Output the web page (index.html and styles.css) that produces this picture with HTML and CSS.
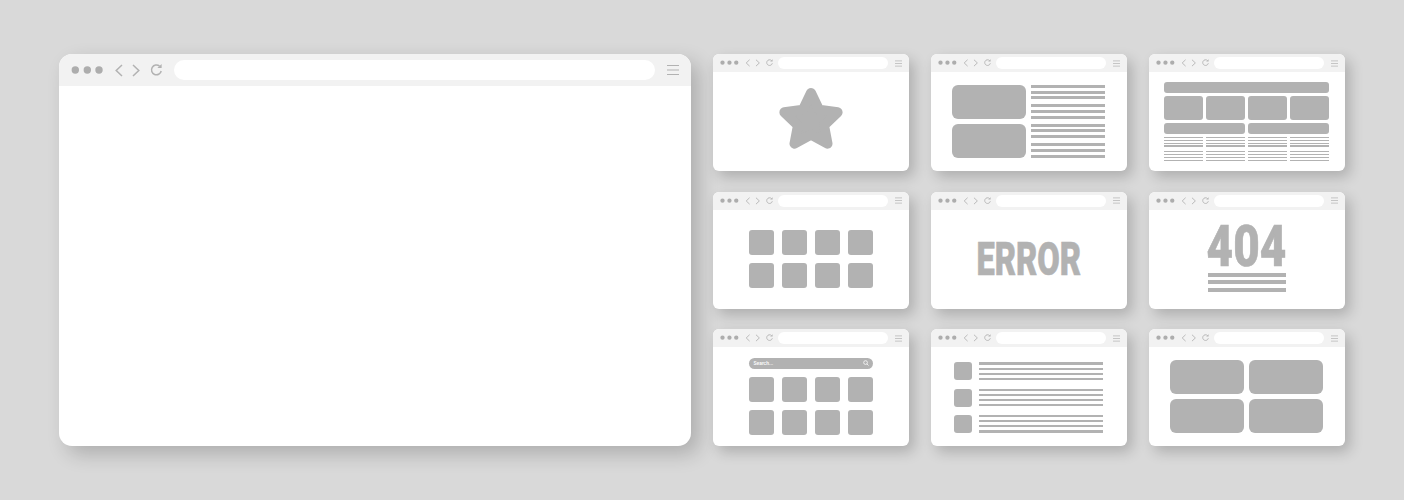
FILE: index.html
```html
<!DOCTYPE html>
<html lang="en">
<head>
  <meta charset="UTF-8" />
  <title>Browser Windows</title>
  <link rel="stylesheet" href="styles.css">
</head>
<body>

  <!-- Shared toolbar icons -->
  <svg class="icon-defs" width="0" height="0">
    <symbol id="nav-icons" viewBox="0 0 92 16">
      <circle cx="4.3" cy="8" r="3.7" fill="#adadad"/>
      <circle cx="16.3" cy="8" r="3.7" fill="#adadad"/>
      <circle cx="28" cy="8" r="3.7" fill="#adadad"/>
      <path d="M51 3 L45.2 8.5 L51 14" fill="none" stroke="#b2b2b2" stroke-width="1.5"/>
      <path d="M62 3 L67.8 8.5 L62 14" fill="none" stroke="#b2b2b2" stroke-width="1.5"/>
      <path d="M88.6 4.2 A4.9 4.9 0 1 0 90.2 9" fill="none" stroke="#b2b2b2" stroke-width="1.5"/>
      <path d="M90.6 2 V6 H86.4 Z" fill="#b2b2b2"/>
    </symbol>
    <symbol id="menu-icon" viewBox="0 0 12 12">
      <path d="M0 1.5 H12 M0 6 H12 M0 10.5 H12" stroke="#b2b2b2" stroke-width="1.2"/>
    </symbol>
  </svg>

  <div class="layout">

    <!-- Big window -->
    <div class="window window-large">
      <div class="toolbar">
        <svg class="nav"><use href="#nav-icons"/></svg>
        <div class="address"></div>
        <svg class="menu"><use href="#menu-icon"/></svg>
      </div>
    </div>

    <div class="thumbs">

      <!-- Star -->
      <div class="window">
        <div class="toolbar">
          <svg class="nav"><use href="#nav-icons"/></svg>
          <div class="address"></div>
          <svg class="menu"><use href="#menu-icon"/></svg>
        </div>
        <div class="body">
          <svg class="star" viewBox="0 0 66 62">
            <path d="M33 6 L41 22.7 L59.6 25.3 L46 38.3 L49.5 56.7 L33 47.6 L16.5 56.7 L20 38.3 L6.4 25.3 L25 22.7 Z"/>
          </svg>
        </div>
      </div>

      <!-- Article -->
      <div class="window">
        <div class="toolbar">
          <svg class="nav"><use href="#nav-icons"/></svg>
          <div class="address"></div>
          <svg class="menu"><use href="#menu-icon"/></svg>
        </div>
        <div class="body">
          <div class="article">
            <div class="article-pics">
              <div class="block"></div>
              <div class="block"></div>
            </div>
            <div class="article-text">
              <div class="lines"><i></i><i></i><i></i></div>
              <div class="lines"><i></i><i></i><i></i></div>
              <div class="lines"><i></i><i></i><i></i></div>
              <div class="lines"><i></i><i></i><i></i></div>
            </div>
          </div>
        </div>
      </div>

      <!-- Dense page -->
      <div class="window">
        <div class="toolbar">
          <svg class="nav"><use href="#nav-icons"/></svg>
          <div class="address"></div>
          <svg class="menu"><use href="#menu-icon"/></svg>
        </div>
        <div class="body">
          <div class="dense">
            <div class="block dense-top"></div>
            <div class="dense-four">
              <div class="block"></div><div class="block"></div><div class="block"></div><div class="block"></div>
            </div>
            <div class="dense-two">
              <div class="block"></div><div class="block"></div>
            </div>
            <div class="dense-four dense-text">
              <div class="fine"><div class="lines"><i></i><i></i><i></i><i></i></div><div class="lines"><i></i><i></i><i></i><i></i></div></div>
              <div class="fine"><div class="lines"><i></i><i></i><i></i><i></i></div><div class="lines"><i></i><i></i><i></i><i></i></div></div>
              <div class="fine"><div class="lines"><i></i><i></i><i></i><i></i></div><div class="lines"><i></i><i></i><i></i><i></i></div></div>
              <div class="fine"><div class="lines"><i></i><i></i><i></i><i></i></div><div class="lines"><i></i><i></i><i></i><i></i></div></div>
            </div>
          </div>
        </div>
      </div>

      <!-- Tiles -->
      <div class="window">
        <div class="toolbar">
          <svg class="nav"><use href="#nav-icons"/></svg>
          <div class="address"></div>
          <svg class="menu"><use href="#menu-icon"/></svg>
        </div>
        <div class="body">
          <div class="tiles">
            <div class="block"></div><div class="block"></div><div class="block"></div><div class="block"></div>
            <div class="block"></div><div class="block"></div><div class="block"></div><div class="block"></div>
          </div>
        </div>
      </div>

      <!-- Error -->
      <div class="window">
        <div class="toolbar">
          <svg class="nav"><use href="#nav-icons"/></svg>
          <div class="address"></div>
          <svg class="menu"><use href="#menu-icon"/></svg>
        </div>
        <div class="body">
          <span class="big-text error-text">ERROR</span>
        </div>
      </div>

      <!-- 404 -->
      <div class="window">
        <div class="toolbar">
          <svg class="nav"><use href="#nav-icons"/></svg>
          <div class="address"></div>
          <svg class="menu"><use href="#menu-icon"/></svg>
        </div>
        <div class="body">
          <div class="not-found">
            <span class="big-text code-text">404</span>
            <div class="lines"><i></i><i></i><i></i></div>
          </div>
        </div>
      </div>

      <!-- Search -->
      <div class="window">
        <div class="toolbar">
          <svg class="nav"><use href="#nav-icons"/></svg>
          <div class="address"></div>
          <svg class="menu"><use href="#menu-icon"/></svg>
        </div>
        <div class="body">
          <div class="search-page">
            <div class="search">
              <span>Search...</span>
              <svg class="search-icon" viewBox="0 0 8 8">
                <circle cx="3.4" cy="3.4" r="2.5"/>
                <path d="M5.2 5.2 L7.4 7.4"/>
              </svg>
            </div>
            <div class="tiles">
              <div class="block"></div><div class="block"></div><div class="block"></div><div class="block"></div>
              <div class="block"></div><div class="block"></div><div class="block"></div><div class="block"></div>
            </div>
          </div>
        </div>
      </div>

      <!-- List -->
      <div class="window">
        <div class="toolbar">
          <svg class="nav"><use href="#nav-icons"/></svg>
          <div class="address"></div>
          <svg class="menu"><use href="#menu-icon"/></svg>
        </div>
        <div class="body">
          <div class="list">
            <div class="list-row"><div class="block"></div><div class="lines"><i></i><i></i><i></i><i></i></div></div>
            <div class="list-row"><div class="block"></div><div class="lines"><i></i><i></i><i></i><i></i></div></div>
            <div class="list-row"><div class="block"></div><div class="lines"><i></i><i></i><i></i><i></i></div></div>
          </div>
        </div>
      </div>

      <!-- Four cards -->
      <div class="window">
        <div class="toolbar">
          <svg class="nav"><use href="#nav-icons"/></svg>
          <div class="address"></div>
          <svg class="menu"><use href="#menu-icon"/></svg>
        </div>
        <div class="body">
          <div class="cards">
            <div class="block"></div><div class="block"></div><div class="block"></div><div class="block"></div>
          </div>
        </div>
      </div>

    </div>
  </div>

</body>
</html>
```

FILE: styles.css
```css
html, body {
  margin: 0;
  height: 500px;
  overflow: hidden;
}

body {
  background-color: #d9d9d9;
  font-family: "Roboto", "Liberation Sans", sans-serif;
}

.icon-defs {
  display: block;
  height: 0;
}

.layout {
  display: flex;
  gap: 22px;
  padding: 54px 59px;
}

.thumbs {
  display: grid;
  grid-template-columns: repeat(3, 196px);
  grid-template-rows: repeat(3, 117px);
  column-gap: 22px;
  row-gap: 20.5px;
}

/* Window */
.window {
  display: flex;
  flex-direction: column;
  background-color: white;
  border-radius: 6px;
  overflow: hidden;
  box-shadow: 5px 6px 14px rgba(0, 0, 0, 0.2);
}

.window-large {
  width: 632px;
  height: 392px;
  border-radius: 13px;
  box-shadow: 8px 8px 20px rgba(0, 0, 0, 0.2);
}

.toolbar {
  display: flex;
  align-items: center;
  flex-shrink: 0;
  height: 18px;
  padding: 0 7px 0 6.5px;
  background-color: #f2f2f2;
}

.nav {
  width: 53.4px;
  height: 9.3px;
  flex-shrink: 0;
}

.address {
  flex: 1;
  height: 12px;
  margin: 0 7px 0 5.1px;
  background-color: white;
  border-radius: 6px;
}

.menu {
  width: 7px;
  height: 7px;
  flex-shrink: 0;
}

.window-large .toolbar {
  height: 32px;
  padding: 0 12px;
}

.window-large .nav {
  width: 92px;
  height: 16px;
}

.window-large .address {
  height: 20px;
  margin: 0 12px 0 11px;
  border-radius: 10px;
}

.window-large .menu {
  width: 12px;
  height: 12px;
}

.body {
  flex: 1;
  display: flex;
  justify-content: center;
  align-items: center;
  padding-right: 1px;
}

/* Shared pieces */
.block {
  background-color: #b2b2b2;
  border-radius: 3px;
}

.lines {
  display: flex;
  flex-direction: column;
  gap: 2.7px;
}

.lines i {
  display: block;
  height: 3px;
  background-color: #b2b2b2;
}

.big-text {
  display: block;
  color: #b2b2b2;
  font-weight: 900;
  letter-spacing: 0;
  white-space: nowrap;
  -webkit-text-stroke: 0.6px #b2b2b2;
}

/* Star */
.star {
  width: 66px;
  height: 62px;
  margin-bottom: 7px;
  fill: #b2b2b2;
  stroke: #b2b2b2;
  stroke-width: 10;
  stroke-linejoin: round;
}

/* Article */
.article {
  display: flex;
  gap: 5px;
}

.article-pics {
  display: flex;
  flex-direction: column;
  gap: 5px;
}

.article-pics .block {
  width: 74px;
  height: 34px;
  border-radius: 6px;
}

.article-text {
  display: flex;
  flex-direction: column;
  gap: 5px;
  width: 74px;
}

/* Dense page */
.dense {
  display: flex;
  flex-direction: column;
  gap: 3.2px;
  width: 165px;
}

.dense-top {
  height: 10.4px;
}

.dense-four {
  display: grid;
  grid-template-columns: repeat(4, 39px);
  column-gap: 3px;
  height: 24.3px;
}

.dense-two {
  display: grid;
  grid-template-columns: repeat(2, 81px);
  column-gap: 3px;
  height: 10.4px;
}

.dense-text {
  height: 24px;
}

.fine {
  display: flex;
  flex-direction: column;
  gap: 4.4px;
}

.fine .lines {
  gap: 1.6px;
}

.fine .lines i {
  height: 1.25px;
}

/* Tiles */
.tiles {
  display: grid;
  grid-template-columns: repeat(4, 25px);
  grid-auto-rows: 25px;
  gap: 8px;
}

/* Error and 404 */
.error-text {
  font-size: 46px;
  line-height: 34px;
  transform: scaleX(0.71);
}

.not-found {
  display: flex;
  flex-direction: column;
  align-items: center;
  gap: 5.5px;
  width: 78px;
}

.code-text {
  font-size: 58px;
  line-height: 41px;
  transform: scaleX(0.79);
}

.not-found .lines {
  width: 100%;
  gap: 3.8px;
}

.not-found .lines i {
  height: 3.8px;
}

/* Search */
.search-page {
  display: flex;
  flex-direction: column;
  gap: 8.7px;
}

.search {
  display: flex;
  justify-content: space-between;
  align-items: center;
  height: 11px;
  padding: 0 3.5px 0 5px;
  background-color: #b2b2b2;
  border-radius: 5.5px;
  color: white;
  font-size: 5px;
  font-weight: 500;
}

.search-icon {
  width: 6px;
  height: 6px;
  fill: none;
  stroke: white;
  stroke-width: 1;
}

/* List */
.list {
  display: flex;
  flex-direction: column;
  gap: 8.2px;
  margin-top: 2px;
}

.list-row {
  display: flex;
  gap: 7.4px;
}

.list-row .block {
  width: 18px;
  height: 18px;
}

.list-row .lines {
  width: 123.5px;
  gap: 2.9px;
}

.list-row .lines i {
  height: 2.3px;
}

/* Four cards */
.cards {
  display: grid;
  grid-template-columns: repeat(2, 74px);
  grid-auto-rows: 34px;
  gap: 4.7px;
}

.cards .block {
  border-radius: 6px;
}
```
